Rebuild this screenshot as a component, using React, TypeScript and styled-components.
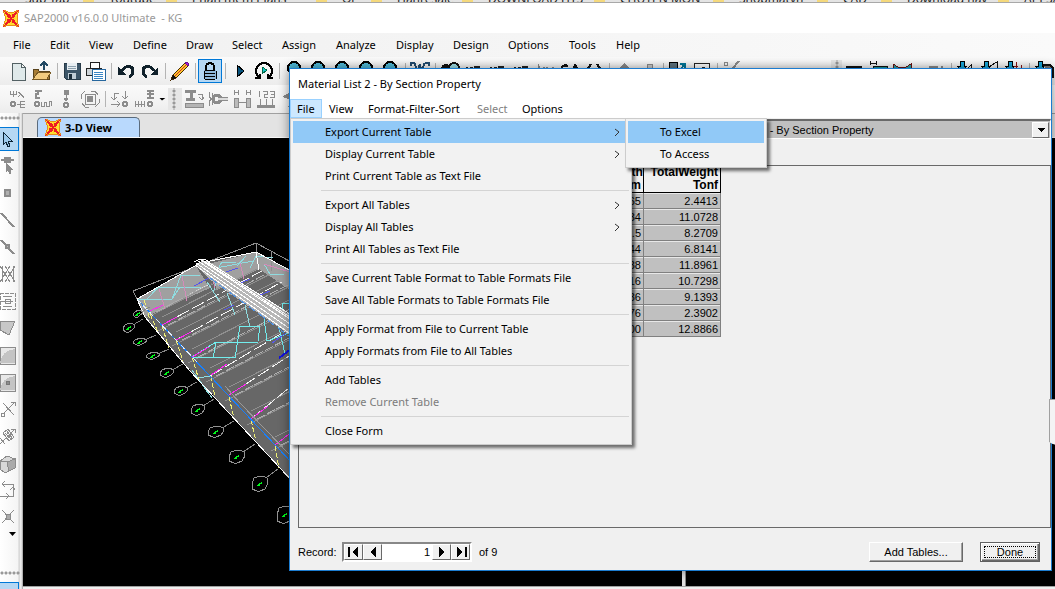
import React from "react";
import styled, { createGlobalStyle, css } from "styled-components";

const UI = `"Noto Sans", "Open Sans", sans-serif`;
const CLASSIC = `"Liberation Sans", Arial, sans-serif`;

const Global = createGlobalStyle`
  * { box-sizing: border-box; }
  html, body { margin: 0; padding: 0; }
  body { background: #f0f0f0; color: #000; font: 11px/16px ${UI}; overflow: hidden; }
  button, input, select { font: inherit; color: inherit; margin: 0; }
  svg { display: block; flex: none; shape-rendering: crispEdges; }
`;

const Shell = styled.div`
  position: relative;
  display: flex;
  flex-direction: column;
  min-height: 100vh;
  overflow: hidden;
`;

/* ---------- bookmarks peeking out above the window ---------- */
const Bookmarks = styled.div`
  display: flex;
  align-items: flex-end;
  height: 3px;
  padding-left: 25px;
  overflow: hidden;
  background: #e4e4e4;
  border-bottom: 1px solid #a8a8a8;
`;
const Bookmark = styled.a<{ $w: number }>`
  flex: none;
  width: ${(p) => p.$w}px;
  margin-bottom: -5px;
  color: #222;
  font-size: 12px;
  text-decoration: none;
  white-space: nowrap;
  display: flex;
  justify-content: space-between;
  &::after {
    content: "";
    width: 11px;
    margin-right: 15px;
    background: #f5d97c;
  }
`;

/* ---------- main window chrome ---------- */
const TitleBar = styled.header`
  display: flex;
  align-items: center;
  gap: 5px;
  height: 30px;
  padding-left: 3px;
  background: #fff;
  color: #999;
  white-space: pre;
`;
const MenuBar = styled.nav`
  display: flex;
  align-items: center;
  height: 24px;
  padding-left: 4px;
  background: linear-gradient(90deg, #f0f0f0, #fafafa);
`;
const MenuBarItem = styled.button<{ $w: number }>`
  width: ${(p) => p.$w}px;
  padding: 0 0 0 9px;
  border: 0;
  background: none;
  text-align: left;
  white-space: nowrap;
`;
const ToolRow = styled.div`
  display: flex;
  justify-content: space-between;
  height: 28px;
  overflow: hidden;
  background: linear-gradient(#fafafa, #f3f3f3 60%, #ececec);
`;
const ToolGroup = styled.div`
  display: flex;
  flex: none;
  align-items: center;
  padding-left: 6px;
  &:nth-child(2) { width: 224px; padding-left: 0; }
`;
const ToolButton = styled.button<{ $on?: boolean }>`
  display: flex;
  flex: none;
  align-items: center;
  justify-content: center;
  width: 24px;
  height: 24px;
  padding: 0;
  border: 1px solid ${(p) => (p.$on ? "#0078d7" : "transparent")};
  background: ${(p) => (p.$on ? "#b5d7f3" : "none")};
`;
const Divider = styled.span`
  flex: none;
  width: 6px;
  height: 16px;
  background: linear-gradient(#b4b4b4, #b4b4b4) 3px 0 / 1px 100% no-repeat;
`;
const Blank = styled.span`
  flex: none;
  width: 10px;
`;
const Grip = styled.span<{ $w: number }>`
  flex: none;
  width: ${(p) => p.$w}px;
  height: 22px;
  background: radial-gradient(circle, #999 1px, transparent 2px) 4px 1px / 4px 4px repeat-y, #e6e6e6;
`;
const Drop = styled.span`
  flex: none;
  width: 12px;
  height: 3px;
  background: #000;
  clip-path: polygon(3px 0, 10px 0, 6px 3px);
`;

/* ---------- workspace ---------- */
const Workspace = styled.div`
  display: flex;
  flex: 1;
  min-height: 0;
`;
const SideTools = styled.aside`
  display: flex;
  flex: none;
  flex-direction: column;
  gap: 3px;
  width: 23px;
  padding-right: 3px;
  overflow: hidden;
  contain: size;
  background: linear-gradient(90deg, #fff, #f4f4f4 18px, #d0d0d0 19px, #f4f4f4 21px, #999 23px);
`;
const SideButton = styled.button<{ $on?: boolean }>`
  flex: none;
  width: 19px;
  height: 24px;
  padding: 0;
  border: solid ${(p) => (p.$on ? "#0078d7" : "transparent")};
  border-width: 1px 1px 1px 0;
  background: ${(p) => (p.$on ? "#b5d7f3" : "none")};
`;
const SideGrip = styled.div`
  flex: none;
  height: 10px;
  margin-top: 1px;
  background: radial-gradient(circle, #999 1px, transparent 2px) 0 2px / 4px 4px repeat-x;
`;
const SideDrop = styled.div`
  flex: none;
  width: 7px;
  height: 4px;
  margin: 0 0 29px 9px;
  background: #000;
  clip-path: polygon(0 0, 100% 0, 50% 100%);
`;
const Views = styled.main`
  display: flex;
  flex: 1;
  flex-direction: column;
  min-width: 0;
`;
const TabStrip = styled.div`
  display: flex;
  flex: none;
  align-items: flex-end;
  height: 25px;
  padding-left: 14px;
  background: #e3e3e3;
  border-top: 1px solid #a0a0a0;
  border-bottom: 1px solid #f8f8f8;
`;
const Tab = styled.button`
  display: flex;
  align-items: center;
  gap: 4px;
  width: 103px;
  height: 20px;
  padding: 0 7px;
  border: 1px solid #5a6b7c;
  border-bottom: 0;
  border-radius: 5px 5px 0 0;
  background: #b9d9fd;
  font-weight: 700;
  white-space: nowrap;
`;
const Panes = styled.div`
  display: flex;
  flex: 1;
  margin-bottom: 2px;
  border-bottom: 1px solid #a0a0a0;
  overflow: hidden;
`;
const Pane = styled.section<{ $grow: number }>`
  flex: ${(p) => p.$grow} 1 0;
  min-width: 0;
  overflow: hidden;
  contain: size;
  background: #000;
`;
const Splitter = styled.div`
  flex: none;
  width: 4px;
  background: #e0e0e0;
  border-right: 1px solid #888;
`;

/* ---------- dialog ---------- */
const Dialog = styled.section`
  position: absolute;
  top: 68px;
  right: 3px;
  bottom: 18px;
  left: 289px;
  display: flex;
  flex-direction: column;
  border: 1px solid #1c7cd0;
  background: #f0f0f0;
  box-shadow: 0 0 10px rgba(0, 0, 0, 0.45);
`;
const DialogTitle = styled.h1`
  flex: none;
  height: 30px;
  margin: 0;
  padding: 7px 8px;
  background: #fff;
  font-size: 11px;
  font-weight: 400;
`;
const DialogMenu = styled.nav`
  position: relative;
  display: flex;
  flex: none;
  height: 19px;
  background: #fff;
`;
const DialogMenuItem = styled.button<{ $w: number; $open?: boolean }>`
  width: ${(p) => p.$w}px;
  height: 19px;
  padding: 0 6px;
  border: 1px solid ${(p) => (p.$open ? "#99d1ff" : "transparent")};
  background: ${(p) => (p.$open ? "#cce8ff" : "none")};
  text-align: left;
  white-space: nowrap;
  &:disabled { color: #808080; }
`;
const popup = css`
  position: absolute;
  margin: 0;
  padding: 2px;
  list-style: none;
  border: 1px solid #ccc;
  background: #f2f2f2;
  box-shadow: 3px 3px 3px rgba(0, 0, 0, 0.55);
`;
const FileMenu = styled.ul`
  ${popup}
  top: 19px;
  left: 0;
  width: 342px;
  z-index: 2;
`;
const SubMenu = styled.ul`
  ${popup}
  top: -3px;
  left: 332px;
  width: 142px;
`;
const MenuEntry = styled.li`
  position: relative;
`;
const MenuCommand = styled.button<{ $active?: boolean }>`
  display: flex;
  align-items: center;
  justify-content: space-between;
  width: 100%;
  height: 22px;
  padding: 0 9px 0 32px;
  border: 0;
  background: ${(p) => (p.$active ? "#91c9f7" : "none")};
  text-align: left;
  white-space: nowrap;
  &:disabled { color: #7c7c7c; }
`;
const MenuRule = styled.li`
  height: 7px;
  margin-left: 28px;
  background: linear-gradient(#d4d4d4, #d4d4d4) 0 3px / 100% 1px no-repeat;
`;
const PickerRow = styled.div`
  display: flex;
  flex: none;
  justify-content: flex-end;
  height: 47px;
  padding-top: 1px;
  font-family: ${CLASSIC};
`;
const Picker = styled.label`
  position: relative;
  width: 49%;
  height: 20px;
`;
const PickerSelect = styled.select`
  appearance: none;
  width: 100%;
  height: 20px;
  padding: 0 0 0 19px;
  border: 1px solid #fff;
  border-top: 2px solid #696969;
  border-radius: 0;
  outline: 0;
  background: #c0c0c0;
`;
const PickerArrow = styled.span`
  position: absolute;
  top: 3px;
  right: 2px;
  display: grid;
  place-items: center;
  width: 17px;
  height: 16px;
  border: 1px solid;
  border-color: #fff #696969 #696969 #fff;
  background: #f0f0f0;
  pointer-events: none;
`;
const GridFrame = styled.div`
  flex: 1;
  min-height: 0;
  margin-left: 8px;
  overflow: hidden;
  border: 1px solid #696969;
`;
const Grid = styled.table`
  width: 422px;
  table-layout: fixed;
  border-collapse: separate;
  border-spacing: 0;
  font-family: ${CLASSIC};
  th {
    height: 27px;
    padding: 0 2px 0 0;
    border-right: 1px solid #000;
    border-bottom: 1px solid #000;
    font-size: 12px;
    line-height: 13px;
    text-align: right;
  }
  td {
    height: 16px;
    padding: 0 2px 0 0;
    border: solid #808080;
    border-width: 0 1px 1px 0;
    background: #c0c0c0;
    box-shadow: inset 0 1px #e8e8e8;
    line-height: 14px;
    font-size: 11px;
    text-align: right;
  }
`;
const Footer = styled.footer`
  display: flex;
  flex: none;
  align-items: center;
  height: 42px;
  padding: 6px 11px 0 8px;
  font-family: ${CLASSIC};
`;
const RecordLabel = styled.label`
  width: 44px;
`;
const Navigator = styled.div`
  display: flex;
  width: 130px;
  height: 20px;
  margin-right: 7px;
  border: 2px solid;
  border-color: #888 #fff #fff #888;
`;
const NavButton = styled.button`
  display: grid;
  place-items: center;
  flex: none;
  width: 19px;
  padding: 0;
  border: 1px solid;
  border-color: #fff #696969 #696969 #fff;
  background: #f0f0f0;
`;
const RecordInput = styled.input`
  flex: 1;
  min-width: 0;
  padding: 0 2px;
  border: 0;
  border-radius: 0;
  text-align: right;
`;
const Actions = styled.div`
  display: flex;
  gap: 17px;
  margin-left: auto;
`;
const PushButton = styled.button<{ $w: number; $default?: boolean }>`
  width: ${(p) => p.$w}px;
  height: 20px;
  padding: 0;
  border: 1px solid;
  border-color: ${(p) => (p.$default ? "#606060" : "#fff #696969 #696969 #fff")};
  background: #f0f0f0;
  line-height: 16px;
  box-shadow: ${(p) =>
    p.$default ? "inset 1px 1px #fff, inset -1px -1px #696969, inset -2px -2px #a0a0a0" : "inset -1px -1px #a0a0a0"};
  ${(p) => p.$default && css`outline: 1px dotted #000; outline-offset: -5px;`}
`;
const EdgeHandle = styled.aside`
  position: absolute;
  top: 399px;
  right: 0;
  width: 6px;
  height: 46px;
  background: #a0a0a0;
  clip-path: polygon(0 0, 100% 0, 100% 100%, 0 43px);
  &::before {
    content: "";
    display: block;
    height: 44px;
    margin: 1px 0 0 1px;
    background: #f4f4f4;
  }
`;

/* ---------- icons ---------- */
const G = "#8c8c8c";
const Magnifier = (
  <>
    <circle cx="10" cy="7" r="6" fill="#4fb9d8" stroke="#000" strokeWidth="2" />
    <path d="M7 7h6" stroke="#000" />
  </>
);
const DownArrow = (
  <path d="M4 0h4v5h3l-5 5-5-5h3z" fill="#17a9dd" stroke="#000" />
);
const icons: Record<string, React.ReactNode> = {
  new: <path d="M4 2h9l4 4v13H4zM13 2v4h4" fill="#dfe9ea" stroke="#536164" />,
  open: (
    <>
      <path d="M1 18V8h5l1 2h10v8z" fill="#a77c35" stroke="#59431c" />
      <path d="M1 18l5-7h13l-4 7z" fill="#f2cb80" stroke="#795a25" />
      <path d="M12 9V2M8 5l4-4 4 4" fill="none" stroke="#234963" strokeWidth="2" />
    </>
  ),
  save: (
    <>
      <path d="M2 2h16v16H4l-2-2z" fill="#3c5568" stroke="#273a48" />
      <path d="M5 2h10v7H5z" fill="#e7edf1" />
      <path d="M6 5h8M6 7h8" stroke="#8ca0ae" />
      <path d="M6 12h8v6H6z" fill="#c0cdd6" />
      <path d="M7 13h3v5H7z" fill="#1b2d3a" />
    </>
  ),
  print: (
    <>
      <path d="M4 7V1h9v6" fill="#fff" stroke="#222" />
      <path d="M0 7h15v7H0z" fill="#cdd3d7" stroke="#222" />
      <path d="M6 8h13v11H6z" fill="#fff" stroke="#27679e" />
      <path d="M8 11h9M8 13h9M8 15h9M8 17h9" stroke="#3b87c6" />
    </>
  ),
  undo: (
    <>
      <path d="M2 6v8h8z" fill="#10212b" />
      <path d="M6 10c3-6 11-6 11 0 0 3-2 5-4 6" fill="none" stroke="#10212b" strokeWidth="3" />
    </>
  ),
  redo: (
    <>
      <path d="M18 6v8h-8z" fill="#10212b" />
      <path d="M14 10c-3-6-11-6-11 0 0 3 2 5 4 6" fill="none" stroke="#10212b" strokeWidth="3" />
    </>
  ),
  pencil: (
    <>
      <path d="M1 19l2-5L15 2l3 3L6 17z" fill="#ffc32b" stroke="#4a2a00" />
      <path d="M5 15L16 4" stroke="#c8302a" />
      <path d="M15 2l2-1 2 2-1 2z" fill="#a320d8" stroke="#6b0c92" />
      <path d="M1 19l2-5 3 3z" fill="#101010" />
    </>
  ),
  lock: (
    <>
      <path d="M6 9V6c0-5 8-5 8 0v3" fill="none" stroke="#000" strokeWidth="2" />
      <path d="M4 9h12v9H4z" fill="#8fb9dc" />
      <path d="M5 9h10M4 10v8M16 10v8M5 12h10M5 15h10M5 18h10" fill="none" stroke="#000" />
    </>
  ),
  play: <path d="M7 4v12l7-6z" fill="#08537d" stroke="#000" />,
  run: (
    <>
      <path d="M6 17a8 8 0 1 1 8 0M1 17h5v-4M19 17h-5v-4" fill="none" stroke="#000" strokeWidth="2" />
      <path d="M8 6v7l5-4z" fill="#13c7c7" stroke="#064" />
    </>
  ),
  zoom: Magnifier,
  frame: <path d="M1 5V2h4M15 2h4v3M5 2l2 11L10 3l2 10 2-11" fill="none" stroke="#234c70" strokeWidth="2" />,
  rotate3d: (
    <>
      <circle cx="6" cy="8" r="5" fill="#111" />
      <circle cx="14" cy="7" r="5" fill="#9fe0e8" stroke="#111" strokeWidth="2" />
    </>
  ),
  plane: <path d="M3 6l4 8M8 6l-5 8M10 6h6M12 7v8" stroke="#222" strokeWidth="2" fill="none" />,
  planeOff: <path d="M3 15V6l5 8V6M11 6l3 8 3-8" stroke={G} strokeWidth="2" fill="none" />,
  perspective: <path d="M2 10a4 4 0 0 1 6-5M12 10l3-6 4 6M3 5h5" fill="none" stroke="#111" strokeWidth="2" />,
  braces: <path d="M7 3L3 9l4 6M13 3l4 6-4 6" fill="none" stroke="#111" strokeWidth="2" />,
  upOff: <path d="M10 2l6 6h-4v9H8V8H4z" fill={G} />,
  barOff: <path d="M9 3h5v14H9z" fill="#ccc" stroke={G} />,
  shade: (
    <>
      <path d="M1 1h8v14H1z" fill="#5f7480" stroke="#000" />
      <path d="M12 3h5v5M17 3l-5 6" stroke="#079" strokeWidth="2" fill="none" />
    </>
  ),
  picture: <path d="M2 2h15v12H2zM5 12l6-6 3 2" fill="#fff" stroke="#222" />,
  percent: (
    <>
      <circle cx="4" cy="3" r="2" fill="none" stroke={G} />
      <path d="M17 0L3 16" stroke={G} strokeWidth="2" />
    </>
  ),
  box: <path d="M3 6h14v8H3z" fill="#1cc3cd" stroke="#111" strokeWidth="2" />,
  beam: <path d="M2 0v4M2 2h6M8 0v4M5 5h14v7H5z" fill="#1b9a9a" stroke="#111" />,
  truss: <path d="M1 3l5 3h8l5-3v11l-5-4H6l-5 4z" fill="#28a6aa" stroke="#6b1111" />,
  steelOff: <path d="M3 6h8v8M16 5v10" fill="none" stroke={G} strokeWidth="2" />,
  load1: <>{DownArrow}<path d="M12 7l3-3v12" stroke="#111" fill="none" /></>,
  load2: <>{DownArrow}<path d="M10 5l7-4v14" stroke="#111" fill="none" /></>,
  load3: <>{DownArrow}<path d="M12 1v12M17 4v10M10 5h4" stroke="#8a1515" fill="none" /></>,
  load4: <>{DownArrow}<path d="M9 4h7l3 3v10" stroke="#111" strokeWidth="2" fill="#777" /></>,
  m1: (
    <g fill="none" stroke={G}>
      <path d="M2 2v3h6V2M5 2v6M10 3l3 2-3 3M13 5l3 4" />
      <circle cx="5" cy="15" r="2" strokeWidth="2" />
      <path d="M17 12h-5v6h5M9 15h8" />
    </g>
  ),
  m2: (
    <g fill="none" stroke={G}>
      <path d="M3 2h7M6 2v3H4v4h4" strokeWidth="2" />
      <circle cx="5" cy="15" r="2" strokeWidth="2" />
      <path d="M9 13v4h3v-4h2v4h3v-5h2v5" />
    </g>
  ),
  m3: (
    <g fill={G} stroke={G}>
      <path d="M8 1h4v4H8zM10 5v6M8 9l2 3 2-3" />
      <circle cx="10" cy="16" r="2" fill="none" strokeWidth="2" />
    </g>
  ),
  m4: (
    <g fill="none" stroke={G}>
      <path d="M5 5h10v10H5zM1 10V6l4-4M19 10v4l-4 4M2 14l3 4h4M18 6l-3-4h-4" />
      <circle cx="10" cy="10" r="3" fill={G} />
    </g>
  ),
  m5: (
    <g fill="none" stroke={G}>
      <path d="M9 4H4v7M1 8l3 3 3-3M15 2v7M12 7l3 3 3-3M1 15h8M7 12l3 3-3 3" />
      <circle cx="15" cy="15" r="2" strokeWidth="2" />
    </g>
  ),
  m6: (
    <g fill="none" stroke={G}>
      <path d="M13 2h7M13 5h7M13 9h7M16 1v8" strokeWidth="2" />
      <path d="M1 12v6M4 12v6M7 12v6M10 12v6M1 15h9" />
      <circle cx="16" cy="15" r="2" strokeWidth="2" />
    </g>
  ),
  s1: (
    <g fill="none" stroke={G}>
      <path d="M1 2h11M7 2v8M2 10h9" strokeWidth="3" />
      <path d="M14 5h4v5M15 8l3 3 2-3" />
      <path d="M1 14h18v4H1z" fill="#b4b4b4" />
    </g>
  ),
  s2: (
    <g fill="none" stroke={G}>
      <path d="M1 3v5l3 2-3 2v5M4 4v12" />
      <circle cx="9" cy="10" r="4" strokeWidth="3" />
      <path d="M10 8h10v3H10" fill="#ddd" />
    </g>
  ),
  s3: <path d="M2 1v5M6 1v5M2 3h4M14 1v5M18 1v5M14 3h4M2 9h4v9H2zM14 9h4v9h-4zM6 13h8" fill="#bbb" stroke={G} />,
  s4: (
    <g fill="none" stroke={G}>
      <path d="M3 2v6M7 2h4v3H8v3h4M14 2h4v6h-4M15 5h3M4 10v6M10 10v6M16 10v6" />
      <path d="M1 17h18" strokeWidth="3" />
    </g>
  ),
  s5: <path d="M2 8l8-5 8 2v4l-6 2v5l3 2H7l2-2v-6z" fill={G} />,
};
const Icon = ({ name }: { name: string }) => (
  <svg width="20" height="20" viewBox="0 0 20 20" aria-hidden="true">{icons[name]}</svg>
);

const sideIcons: [string, React.ReactNode][] = [
  ["Pointer", <path d="M3 4v13l3-3 2 5 2-1-2-5h4z" fill="#9cc9ec" stroke="#0b2233" />],
  ["Reshape", <g stroke={G} fill="#ccc"><path d="M1 5h13M5 3h5v4H5z" strokeWidth="2" /><path d="M6 8v9l2-2 2 4 1-1-1-4h2z" fill={G} /></g>],
  ["Joint", <path d="M5 8h5v6H5z" fill="#b0b0b0" stroke={G} strokeWidth="2" />],
  ["Frame", <path d="M1 4l13 14" stroke={G} strokeWidth="2" />],
  ["Quick frame", <g stroke={G} strokeWidth="2"><path d="M1 4l13 14" /><path d="M6 9h3v3H6z" fill="#bbb" /></g>],
  ["Braces", <path d="M0 3l5 8-5 8M15 3l-5 8 5 8M5 3l5 8-5 8M10 3l-5 8 5 8M2 3v16M13 3v16" stroke={G} fill="none" />],
  ["Secondary beams", <g stroke={G} fill="none"><path d="M0 3h15v16H0z" strokeDasharray="4 1" /><path d="M1 11h12M5 9h5v4H5zM3 6h9M3 16h9" /></g>],
  ["Poly area", <path d="M0 4h15L9 18 0 13z" fill="#c7c7c7" stroke={G} />],
  ["Rectangular area", <g><path d="M0 3h15v17H0z" fill="#e8e8e8" stroke={G} /><path d="M0 19C1 11 6 6 15 5v14z" fill="#c4c4c4" /></g>],
  ["Quick area", <g><path d="M0 3h15v17H0z" fill="#e8e8e8" stroke={G} /><path d="M0 19C1 11 6 6 15 5v14z" fill="#c4c4c4" /><path d="M6 10h3v3H6z" fill={G} stroke="#777" /></g>],
  ["Link", <path d="M3 16L15 4M11 4h4v4M3 5l11 12M1 15h3v3H1z" stroke={G} fill="none" />],
  ["Two joint link", <g stroke={G} fill="none"><path d="M0 19L15 4M11 4h4v4M0 13l5 6M3 8l5-4 6 8-5 4z" /><path d="M5 8l6 6M7 6l5 7M5 11l5-5M8 13l4-5" /></g>],
  ["Solid", <g stroke={G}><path d="M0 9l7-5 8 3v9l-10 5-5-4z" fill="#d8d8d8" /><path d="M7 10l8-3v9l-6 3z" fill="#aaa" /><path d="M0 9l7 1 2 9" fill="none" /></g>],
  ["Snap", <path d="M13 12V5H2M5 2L2 5l3 3M0 17h9M6 14l3 3-3 3M10 11l3-3 2 3M13 12v5h-4" stroke={G} fill="none" />],
  ["Intersections", <g stroke={G}><path d="M2 4l12 13M14 4L2 17" /><path d="M6 8h4v5H6z" fill="#aaa" /></g>],
];

const Logo = () => (
  <svg width="16" height="17" viewBox="0 0 16 17" aria-hidden="true">
    <path d="M0 0l5 2h6l5-2-2 6v5l2 6-5-2H5l-5 2 2-6V6z" fill="#ffe030" stroke="#e88a1c" />
    <path d="M0 0l6 4 2 1 2-1 6-4-4 6-1 2 1 3 4 6-6-4-2-1-2 1-6 4 4-6 1-3-1-2z" fill="#ee1c24" />
    <path d="M8 3v11M4 8h8" stroke="#ffd21e" />
    <path d="M7 7h2v3H7z" fill="#ee1c24" />
  </svg>
);
const Chevron = () => (
  <svg width="5" height="9" viewBox="0 0 5 9" aria-hidden="true" shapeRendering="auto">
    <path d="M0 1l4 3-4 4" fill="none" stroke="#333" style={{ shapeRendering: "auto" }} />
  </svg>
);

/* ---------- the structural model ---------- */
const bubbles = [
  [137, 313, 4, 3], [128, 327, 5, 4], [139, 341, 6, 3], [152, 355, 6, 3], [166, 372, 6, 4], [180, 390, 6, 4],
  [197, 409, 6, 5], [215, 431, 7, 5], [236, 456, 7, 6], [259, 483, 7, 7], [284, 514, 7, 8],
];
const bays = [[150, 312], [162, 325], [176, 340], [192, 357], [210, 376], [229, 395], [251, 419], [275, 445]];
const Model = () => (
  <svg width="270" height="450" viewBox="23 138 270 450" role="img" aria-label="3-D frame model">
    <clipPath id="roof"><path d="M145 317l60-31 51-18 37 20v195L190 370z" /></clipPath>
    <path d="M137 299l63-36 56-11 37 20v210L190 370l-45-53z" fill="#676767" />
    <path d="M137 299l59-33 14 22-65 29zM208 264l48-12 37 20v20l-34-23-42 21z" fill="#a0a0a0" />
    <path d="M137 299l-4-8 123-48 37 20M256 243v9M271 252v19" fill="none" stroke="#8f8f8f" />
    <g fill="none" stroke="#8f8f8f" clipPath="url(#roof)">
      {bays.map(([x, y]) => (
        <g key={x}>
          <path d={`M${x} ${y - 8}l150-76M${x - 4} ${y + 6}l150-76`} />
          <path d={`M${x + 6} ${y}l150-78`} strokeDasharray="9 2" stroke="#b0b0b0" />
        </g>
      ))}
      <g stroke="#f4f4f4" strokeDasharray="14 3">
        <path d="M150 312l115-54M162 325l120-65M176 340l113-62M210 376l79-47M229 395l60-39M251 419l38-31" />
      </g>
    </g>
    <g fill="none" stroke="#8fdce0">
      <path d="M137 299h35l8-12M147 299l12-12h42M172 299l9-24M158 287l-6 6M180 275h20M211 269l42-8M217 270l5-8M237 266l9-10M222 262h14M250 268l6-12 17 2M264 264l6 10h14" />
      <path d="M207 282l13 20M213 293l4-13M227 293l8 22M245 305l5 22" />
      <path d="M192 357h43M192 357l24-15h42M213 358l3-16M235 358l5-32h20l-2 15M263 310l4 31 22-8M289 303h-7v12h7M278 323l7 31" stroke="#72eded" />
      <path d="M192 370l20 28M210 376l-12 2 10 15" />
    </g>
    <g fill="none" stroke="#d48bb9"><path d="M159 289l6 20M182 276l5 25M211 272l4 16M240 263l4 16M264 264l26 8" /></g>
    <path d="M194 286l15-8M226 272l12-4M236 285l14-6M258 296l12-5M224 310l10-5M272 343l17-12" stroke="#5757ec" />
    <path d="M279 358l12-9" stroke="#1414dc" strokeWidth="2" />
    <g stroke="#ff28f4">
      <path d="M150 311l13-6M162 325l15-8M176 340l15-8M192 357l17-10M211 375l16-11M229 395l17-11M251 419l17-13M275 445l18-14" />
    </g>
    <path d="M144 300l6 20M150 314l8 18M162 326l7 22M176 340l7 21M192 357l7 23M211 376l4 21M229 397l5 21M251 420l5 21M275 446l4 22" stroke="#eff075" strokeDasharray="5 2" fill="none" />
    <path d="M137 299l73 77 83 88" fill="none" stroke="#1680ff" />
    <path d="M137 299l60 63" stroke="#dcecff" strokeDasharray="6 3" />
    <path d="M225 386l15 17 50 52" stroke="#999" fill="none" />
    <path d="M137 299l63-36 56-11 37 20M256 252l3 18M137 299l8 18 45 54 103 111" fill="none" stroke="#fff" />
    <path d="M197 266l5-6 10 3 81 54v20l-84-58z" fill="#b7b7b7" />
    <g stroke="#fff" fill="none">
      <path d="M196 263l97 68M198 261l95 65M201 260l92 61M204 261l89 58M208 262l85 54M195 265l98 71" />
      <path d="M194 262l6-3 6 1 4 3" />
    </g>
    <path d="M210 278l83 61" stroke="#4d91e5" strokeDasharray="8 4" />
    {bubbles.map(([x, y, rx, ry]) => (
      <g key={x} fill="none">
        <path d={`M${x + rx} ${y - ry + 2}l${rx + 5} ${-ry - 2}`} stroke="#858585" />
        <path
          d={`M${x - rx} ${y + 1}l2 ${1 - ry}l${rx - 1} -2h3l${rx - 3} 2l1 ${ry - 2}l-3 ${ry - 1}l${2 - rx} 2h-3l${2 - rx} -2z`}
          stroke="#929292"
        />
        <path d={`M${x - 2} ${y + 2}h2v-2h2v-1h1M${x - 1} ${y + 1}h2`} stroke="#00f51a" />
      </g>
    ))}
  </svg>
);

/* ---------- data ---------- */
const bookmarks: [string, number][] = [
  ["Sub Tap", 84], ["Youtube", 83], ["Phan mem Plans", 150], ["Or", 55], ["Hanresale", 91], ["DOWNLOAD HTS", 132],
  ["CHUYEN MON", 119], ["Shopmatvn", 104], ["CAD", 64], ["Download hay", 117], ["API SAP", 80],
];
const mainMenu: [string, number][] = [
  ["File", 37], ["Edit", 39], ["View", 44], ["Define", 53], ["Draw", 46], ["Select", 50], ["Assign", 54],
  ["Analyze", 60], ["Display", 57], ["Design", 55], ["Options", 61], ["Tools", 47], ["Help", 50],
];
const topTools = "new open | save print | undo redo | pencil | lock | play run | zoom zoom zoom zoom zoom | frame | rotate3d plane plane plane planeOff perspective braces | upOff barOff | shade picture | percent".split(" ");
const rightTools = "grip box beam truss blank steelOff | load1 load2 load3 | load4".split(" ");
const lowerTools = "m1 m2 m3 m4 | m5 m6 drop grip2 s1 s2 s3 s4 s5".split(" ");
type Entry = null | { label: string; more?: boolean; off?: boolean };
const fileMenu: Entry[] = [
  { label: "Export Current Table", more: true }, { label: "Display Current Table", more: true },
  { label: "Print Current Table as Text File" }, null,
  { label: "Export All Tables", more: true }, { label: "Display All Tables", more: true },
  { label: "Print All Tables as Text File" }, null,
  { label: "Save Current Table Format to Table Formats File" }, { label: "Save All Table Formats to Table Formats File" }, null,
  { label: "Apply Format from File to Current Table" }, { label: "Apply Formats from File to All Tables" }, null,
  { label: "Add Tables" }, { label: "Remove Current Table", off: true }, null,
  { label: "Close Form" },
];
const rows = [
  ["65", "2.4413"], ["34", "11.0728"], ["5.5", "8.2709"], ["44", "6.8141"], ["38", "11.8961"],
  ["16", "10.7298"], ["36", "9.1393"], ["76", "2.3902"], ["00", "12.8866"],
];

const Tools = ({ items }: { items: string[] }) => (
  <ToolGroup>
    {items.map((t, i) => {
      if (t === "|") return <Divider key={i} />;
      if (t === "blank") return <Blank key={i} />;
      if (t === "drop") return <Drop key={i} />;
      if (t === "grip") return <Grip key={i} $w={11} />;
      if (t === "grip2") return <Grip key={i} $w={14} />;
      return <ToolButton key={i} $on={t === "lock"} aria-label={t}><Icon name={t} /></ToolButton>;
    })}
  </ToolGroup>
);
const NavIcon = ({ d }: { d: string }) => (
  <svg width="12" height="12" viewBox="0 0 12 12" aria-hidden="true"><path d={d} /></svg>
);

export default function App() {
  return (
    <Shell>
      <Global />
      <Bookmarks>
        {bookmarks.map(([t, w]) => <Bookmark key={t} href="#" $w={w}>{t}</Bookmark>)}
      </Bookmarks>
      <TitleBar><Logo />{"SAP2000 v16.0.0 Ultimate  - KG"}</TitleBar>
      <MenuBar>
        {mainMenu.map(([t, w]) => <MenuBarItem key={t} $w={w}>{t}</MenuBarItem>)}
      </MenuBar>
      <ToolRow><Tools items={topTools} /><Tools items={rightTools} /></ToolRow>
      <ToolRow><Tools items={lowerTools} /></ToolRow>
      <Workspace>
        <SideTools>
          <SideGrip />
          {sideIcons.map(([name, art], i) => (
            <SideButton key={name} $on={i === 0} aria-label={name}>
              <svg width="16" height="22" viewBox="0 0 16 22" aria-hidden="true" fill="none">{art}</svg>
            </SideButton>
          ))}
          <SideDrop />
          <SideGrip />
          <SideButton $on aria-label="Snap to joints" />
        </SideTools>
        <Views>
          <TabStrip><Tab><Logo />3-D View</Tab></TabStrip>
          <Panes>
            <Pane $grow={659}><Model /></Pane>
            <Splitter />
            <Pane $grow={369} />
          </Panes>
        </Views>
      </Workspace>

      <Dialog role="dialog" aria-label="Material List 2">
        <DialogTitle>Material List 2 - By Section Property</DialogTitle>
        <DialogMenu>
          <DialogMenuItem $w={32} $open>File</DialogMenuItem>
          <DialogMenuItem $w={39}>View</DialogMenuItem>
          <DialogMenuItem $w={109}>Format-Filter-Sort</DialogMenuItem>
          <DialogMenuItem $w={45} disabled>Select</DialogMenuItem>
          <DialogMenuItem $w={56}>Options</DialogMenuItem>
          <FileMenu>
            {fileMenu.map((e, i) =>
              e ? (
                <MenuEntry key={i}>
                  <MenuCommand $active={i === 0} disabled={e.off}>{e.label}{e.more && <Chevron />}</MenuCommand>
                  {i === 0 && (
                    <SubMenu>
                      <li><MenuCommand $active>To Excel</MenuCommand></li>
                      <li><MenuCommand>To Access</MenuCommand></li>
                    </SubMenu>
                  )}
                </MenuEntry>
              ) : <MenuRule key={i} />
            )}
          </FileMenu>
        </DialogMenu>
        <PickerRow>
          <Picker>
            <PickerSelect aria-label="Table"><option>Material List 2 - By Section Property</option></PickerSelect>
            <PickerArrow><NavIcon d="M3 4h7L6 8z" /></PickerArrow>
          </Picker>
        </PickerRow>
        <GridFrame>
          <Grid>
            <colgroup><col /><col width="69" /><col width="77" /></colgroup>
            <thead><tr><th /><th>TotalLength<br />m</th><th>TotalWeight<br />Tonf</th></tr></thead>
            <tbody>
              {rows.map(([l, w]) => <tr key={w}><td /><td>{l}</td><td>{w}</td></tr>)}
            </tbody>
          </Grid>
        </GridFrame>
        <Footer>
          <RecordLabel htmlFor="record">Record:</RecordLabel>
          <Navigator>
            <NavButton aria-label="First"><NavIcon d="M0 1h2v10H0zM10 1v10L4 6z" /></NavButton>
            <NavButton aria-label="Previous"><NavIcon d="M9 1v10L3 6z" /></NavButton>
            <RecordInput id="record" defaultValue="1" />
            <NavButton aria-label="Next"><NavIcon d="M3 1v10l6-5z" /></NavButton>
            <NavButton aria-label="Last"><NavIcon d="M2 1v10l6-5zM10 1h2v10h-2z" /></NavButton>
          </Navigator>
          <span>of 9</span>
          <Actions>
            <PushButton $w={94}>Add Tables...</PushButton>
            <PushButton $w={60} $default>Done</PushButton>
          </Actions>
        </Footer>
      </Dialog>
      <EdgeHandle />
    </Shell>
  );
}
